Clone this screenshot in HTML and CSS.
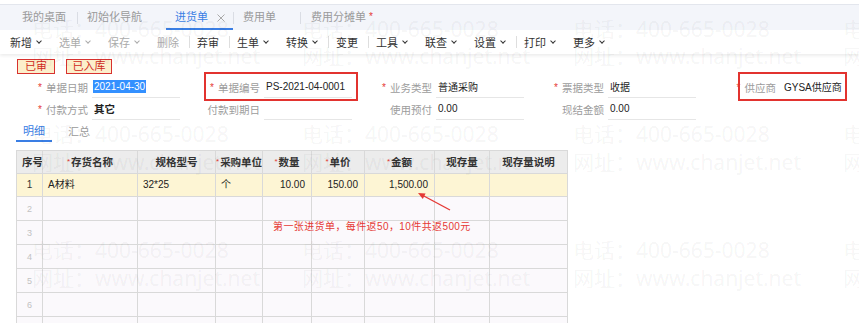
FILE: index.html
```html
<!DOCTYPE html>
<html lang="zh-CN">
<head>
<meta charset="utf-8">
<title>进货单</title>
<link rel="stylesheet" href="styles.css">
</head>
<body>
<div class="page">
  <div class="tabbar">
    <span class="tab t1">我的桌面</span>
    <span class="tsep s1"></span>
    <span class="tab t2">初始化导航</span>
    <span class="tab active">进货单<svg class="close" width="8" height="8" viewBox="0 0 8 8"><path d="M0.5 0.5L7.5 7.5M7.5 0.5L0.5 7.5" stroke="#a9a9a9" stroke-width="1"/></svg></span>
    <span class="tsep"></span>
    <span class="tab t3">费用单</span>
    <span class="tsep s3"></span>
    <span class="tab t4">费用分摊单<i class="dot">*</i></span>
  </div>

  <div class="toolbar">
    <span class="tb">新增<i class="chev"></i></span>
    <span class="tb dis">选单<i class="chev"></i></span>
    <span class="tb dis">保存<i class="chev"></i></span>
    <span class="tb dis">删除</span>
    <span class="tbsep"></span>
    <span class="tb">弃审</span>
    <span class="tbsep"></span>
    <span class="tb">生单<i class="chev"></i></span>
    <span class="tb">转换<i class="chev"></i></span>
    <span class="tbsep"></span>
    <span class="tb">变更</span>
    <span class="tbsep"></span>
    <span class="tb">工具<i class="chev"></i></span>
    <span class="tb">联查<i class="chev"></i></span>
    <span class="tb">设置<i class="chev"></i></span>
    <span class="tbsep"></span>
    <span class="tb">打印<i class="chev"></i></span>
    <span class="tb">更多<i class="chev"></i></span>
  </div>

  <div class="stamps">
    <span class="stamp st1">已审</span>
    <span class="stamp st2">已入库</span>
  </div>

  <div class="form">
    <div class="field"><label><i class="req">*</i>单据日期</label><div class="val"><span class="sel">2021-04-30</span></div></div>
    <div class="field"><label><i class="req">*</i>单据编号</label><div class="val">PS-2021-04-0001</div></div>
    <div class="field"><label><i class="req">*</i>业务类型</label><div class="val">普通采购</div></div>
    <div class="field"><label><i class="req">*</i>票据类型</label><div class="val">收据</div></div>
    <div class="field"><label><i class="req">*</i>供应商</label><div class="val nol">GYSA供应商</div></div>
    <div class="field"><label><i class="req">*</i>付款方式</label><div class="val"><b>其它</b></div></div>
    <div class="field"><label>付款到期日</label><div class="val"></div></div>
    <div class="field"><label>使用预付</label><div class="val">0.00</div></div>
    <div class="field"><label>现结金额</label><div class="val">0.00</div></div>
    <span class="mark m1"></span>
    <span class="mark m2"></span>
  </div>

  <div class="subtabs">
    <span class="stab on">明细</span>
    <span class="stab off">汇总</span>
  </div>

  <table class="grid">
    <colgroup>
      <col class="w26"><col class="w95"><col class="w78"><col class="w47"><col class="w49"><col class="w53"><col class="w70"><col class="w55"><col class="w78">
    </colgroup>
    <thead>
      <tr>
        <th>序号</th>
        <th><i class="hr">*</i>存货名称</th>
        <th>规格型号</th>
        <th class="tight"><i class="hr">*</i>采购单位</th>
        <th><i class="hr">*</i>数量</th>
        <th><i class="hr">*</i>单价</th>
        <th><i class="hr">*</i>金额</th>
        <th>现存量</th>
        <th>现存量说明</th>
      </tr>
    </thead>
    <tbody>
      <tr class="cur">
        <td class="n">1</td><td>A材料</td><td>32*25</td><td>个</td><td class="r">10.00</td><td class="r">150.00</td><td class="r">1,500.00</td><td></td><td></td>
      </tr>
      <tr><td class="n">2</td><td></td><td></td><td></td><td></td><td></td><td></td><td></td><td></td></tr>
      <tr><td class="n">3</td><td></td><td></td><td></td><td></td><td></td><td></td><td></td><td></td></tr>
      <tr><td class="n">4</td><td></td><td></td><td></td><td></td><td></td><td></td><td></td><td></td></tr>
      <tr><td class="n">5</td><td></td><td></td><td></td><td></td><td></td><td></td><td></td><td></td></tr>
      <tr><td class="n">6</td><td></td><td></td><td></td><td></td><td></td><td></td><td></td><td></td></tr>
      <tr><td class="n">7</td><td></td><td></td><td></td><td></td><td></td><td></td><td></td><td></td></tr>
    </tbody>
  </table>

  <div class="note">第一张进货单，每件返50，10件共返500元</div>
  <svg class="arrow" width="44" height="28" viewBox="0 0 44 28">
    <line x1="38" y1="24" x2="10" y2="9" stroke="#e53935" stroke-width="1.4"/>
    <polygon points="6,7 13.6,7.6 10.8,13" fill="#e53935"/>
  </svg>

  <div class="wm">
    <span class="tel y1 x1">电话：400-665-0028</span>
    <span class="tel y1 x2">电话：400-665-0028</span>
    <span class="tel y1 x3">电话：400-665-0028</span>
    <span class="tel y1 x4">电话：400-665-0028</span>
    <span class="web y2 x1">网址：www.chanjet.net</span>
    <span class="web y2 x2">网址：www.chanjet.net</span>
    <span class="web y2 x3">网址：www.chanjet.net</span>
    <span class="web y2 x4">网址：www.chanjet.net</span>
    <span class="tel y3 x1">电话：400-665-0028</span>
    <span class="tel y3 x2">电话：400-665-0028</span>
    <span class="tel y3 x3">电话：400-665-0028</span>
    <span class="tel y3 x4">电话：400-665-0028</span>
    <span class="web y4 x1">网址：www.chanjet.net</span>
    <span class="web y4 x2">网址：www.chanjet.net</span>
    <span class="web y4 x3">网址：www.chanjet.net</span>
    <span class="web y4 x4">网址：www.chanjet.net</span>
    <span class="tel y5 x1">电话：400-665-0028</span>
    <span class="tel y5 x2">电话：400-665-0028</span>
    <span class="tel y5 x3">电话：400-665-0028</span>
    <span class="tel y5 x4">电话：400-665-0028</span>
    <span class="web y6 x1">网址：www.chanjet.net</span>
    <span class="web y6 x2">网址：www.chanjet.net</span>
    <span class="web y6 x3">网址：www.chanjet.net</span>
    <span class="web y6 x4">网址：www.chanjet.net</span>
  </div>
</div>
</body>
</html>
```

FILE: styles.css
```css
* { box-sizing: border-box; margin: 0; padding: 0; }
html, body { width: 859px; height: 323px; overflow: hidden; background: #fff; }
body {
  font-family: "Liberation Sans", "Noto Sans CJK SC", sans-serif;
  font-size: 11px;
  color: #333;
}
i { font-style: normal; }
.page { position: relative; width: 859px; height: 323px; overflow: hidden; }

/* top tabs */
.tabbar {
  margin-top: 4px;
  height: 26px;
  border-top: 1px solid #e3e6ed;
  background: #f3f5fa;
  display: flex;
  align-items: center;
  font-size: 11px;
  color: #9a9a9a;
}
.tab { white-space: nowrap; line-height: 1; }
.t1 { margin-left: 22px; }
.tsep { width: 1px; height: 12px; background: #dadde4; }
.s1 { margin-left: 11px; }
.t2 { margin-left: 9px; }
.tab.active {
  margin-left: 24px;
  align-self: stretch;
  display: flex;
  align-items: center;
  padding: 2px 8px 0 9px;
  border-bottom: 2px solid #3a7ee4;
  color: #3a7ee4;
}
.close { margin-left: 9px; }
.t3 { margin-left: 9px; }
.s3 { margin-left: 24px; }
.t4 { margin-left: 10px; }
.dot { color: #e53935; margin-left: 3px; font-size: 10px; vertical-align: top; }

/* toolbar */
.toolbar {
  position: relative;
  z-index: 1;
  height: 24px;
  display: flex;
  align-items: center;
  padding-left: 10px;
  background: #fff;
  box-shadow: 0 2px 3px rgba(0, 0, 0, 0.07);
  font-size: 11px;
  color: #333;
}
.tb { display: flex; align-items: center; margin-right: 17px; white-space: nowrap; }
.tb.dis { color: #ababab; }
.chev {
  display: block;
  width: 4px;
  height: 4px;
  border-right: 1.2px solid currentColor;
  border-bottom: 1.2px solid currentColor;
  transform: rotate(45deg);
  margin: -3px 1px 0 5px;
}
.tbsep { width: 1px; height: 12px; background: #dedede; margin: 0 7px 0 -7px; }

/* stamps */
.stamps { display: flex; gap: 11px; padding-left: 17px; margin-top: 5px; height: 15px; }
.stamp {
  height: 15px;
  border: 1.5px solid #d8322f;
  background: #fcefcb;
  color: #d02a22;
  font-size: 11px;
  line-height: 1;
  display: flex;
  align-items: center;
  justify-content: center;
}
.st1 { width: 38px; }
.st2 { width: 46px; }

/* form */
.form {
  position: relative;
  display: grid;
  grid-template-columns: repeat(5, 166px);
  column-gap: 6px;
  grid-auto-rows: 22px;
  padding-left: 16px;
  margin-top: 2px;
}
.field { display: flex; align-items: stretch; }
.field label {
  width: 72px;
  margin-right: 4px;
  display: flex;
  align-items: center;
  justify-content: flex-end;
  color: #9c9c9c;
  font-size: 10.5px;
  white-space: nowrap;
}
.req { color: #e53935; margin-right: 4px; font-size: 10px; }
.val {
  width: 88px;
  border-bottom: 1px solid #e6e6e6;
  padding-left: 2px;
  display: flex;
  align-items: center;
  color: #222;
  font-size: 10px;
  white-space: nowrap;
}
.val.nol { border-bottom-color: transparent; padding-left: 4px; }
.val b { font-size: 10.5px; }
.sel { background: #3390ff; color: #fff; padding: 1px 1px; margin-left: -1px; }
.mark { position: absolute; border: 2px solid #e2332f; pointer-events: none; }
.m1 { left: 204px; top: -4px; width: 154px; height: 29px; }
.m2 { left: 738px; top: -4px; width: 109px; height: 29px; }

/* sub tabs */
.subtabs { display: flex; height: 22px; padding-left: 16px; font-size: 11px; }
.stab { display: flex; align-items: center; justify-content: center; color: #9a9a9a; }
.stab.on { width: 36px; color: #3a7ee4; border-bottom: 2px solid #3a7ee4; }
.stab.off { margin-left: 16px; }

/* grid */
.grid {
  margin: 8px 0 0 16px;
  border-collapse: collapse;
  table-layout: fixed;
  width: 551px;
  font-size: 10px;
}
.w26 { width: 26px; } .w95 { width: 95px; } .w78 { width: 78px; } .w47 { width: 47px; }
.w49 { width: 49px; } .w53 { width: 53px; } .w70 { width: 70px; } .w55 { width: 55px; }
.grid th, .grid td {
  border: 1px solid #d9d9d9;
  padding: 0 5px;
  white-space: nowrap;
  overflow: hidden;
  line-height: 12px;
}
.grid th {
  height: 23px;
  background: #ececec;
  font-weight: bold;
  font-size: 10.5px;
  color: #333;
  text-align: center;
}
.grid th.tight { padding: 0; }
.hr { color: #e53935; font-size: 8px; vertical-align: top; margin-right: 1px; font-weight: normal; }
.grid td { height: 24px; background: #fbf9fc; color: #222; }
.grid tr.cur td { height: 23px; background: #fdf5d4; }
.grid td.n { text-align: center; padding: 0; color: #c2c2c2; font-size: 9px; }
.grid tr.cur td.n { color: #333; font-size: 10px; }
.grid td.r { text-align: right; padding-right: 6px; }

/* annotations */
.note {
  position: absolute;
  left: 273px;
  top: 221px;
  font-size: 10px;
  line-height: 12px;
  letter-spacing: 0.4px;
  color: #e53935;
  white-space: nowrap;
}
.arrow { position: absolute; left: 412px; top: 186px; }

/* watermark */
.wm { position: absolute; inset: 0; pointer-events: none; z-index: 5; }
.wm span {
  position: absolute;
  font-family: "Noto Sans", "Noto Sans CJK SC", sans-serif;
  font-size: 21px;
  line-height: 22px;
  color: rgba(0, 0, 0, 0.055);
  white-space: nowrap;
}
.y1 { top: 18px; } .y2 { top: 45px; }
.y3 { top: 123px; } .y4 { top: 151px; }
.y5 { top: 239px; } .y6 { top: 267px; }
.x1 { left: 32px; } .x2 { left: 302px; } .x3 { left: 573px; } .x4 { left: 843px; }
```
